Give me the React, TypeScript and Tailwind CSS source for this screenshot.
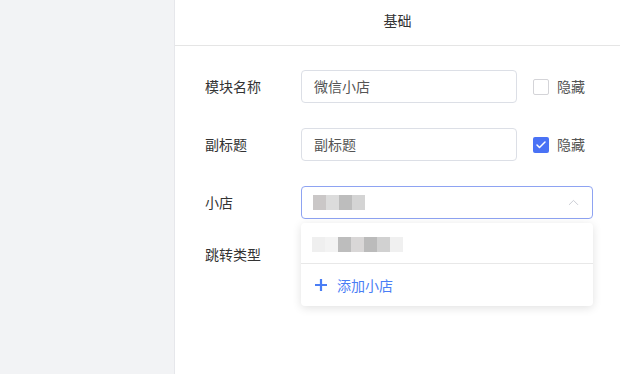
import { Check, ChevronUp } from 'lucide-react'

const font = { fontFamily: '"Noto Sans CJK SC", "Noto Sans", sans-serif' }

const Blur = ({ colors }: { colors: string[] }) => (
  <div className="flex h-[15px] blur-[0.6px]">
    {colors.map((c, i) => (
      <div key={i} className="h-full w-[13px]" style={{ backgroundColor: c }} />
    ))}
  </div>
)

const HideCheck = ({ checked }: { checked: boolean }) => (
  <label className="ml-4 flex items-center gap-2 text-[14px] text-[#555]">
    {checked ? (
      <span className="flex h-4 w-4 items-center justify-center rounded-[2px] bg-[#4a72f5]">
        <Check size={12} strokeWidth={3} className="text-white" />
      </span>
    ) : (
      <span className="h-4 w-4 rounded-[2px] border border-[#d4d4d8] bg-white" />
    )}
    隐藏
  </label>
)

export default function App() {
  return (
    <div className="flex h-[374px] w-[620px] bg-white" style={font}>
      <aside className="w-[175px] shrink-0 border-r border-[#e6e7eb] bg-[#f2f3f5]" />
      <main className="flex flex-1 flex-col">
        <header className="flex h-[46px] items-center justify-center border-b border-[#e5e5e5] pb-[5px] text-[14px] text-[#333]">
          基础
        </header>
        <div className="flex flex-col pl-[30px] pr-[27px] pt-[24px] text-[14px] text-[#333]">
          <div className="flex items-center">
            <span className="w-[96px]">模块名称</span>
            <div className="flex h-[33px] w-[216px] items-center rounded-[4px] border border-[#dcdfe6] px-3 text-[#555]">
              微信小店
            </div>
            <HideCheck checked={false} />
          </div>
          <div className="mt-[25px] flex items-center">
            <span className="w-[96px]">副标题</span>
            <div className="flex h-[33px] w-[216px] items-center rounded-[4px] border border-[#dcdfe6] px-3 text-[#555]">
              副标题
            </div>
            <HideCheck checked={true} />
          </div>
          <div className="mt-[25px] flex items-center">
            <span className="w-[96px]">小店</span>
            <div className="relative flex-1">
              <div className="flex h-[33px] items-center justify-between rounded-[4px] border border-[#8ea3f2] pl-[11px] pr-[10px]">
                <Blur colors={['#cac7c7', '#dcdcdc', '#bdbdbd', '#d4d4d4']} />
                <ChevronUp size={17} strokeWidth={1.2} className="text-[#c0c4cc]" />
              </div>
              <div className="absolute left-0 right-0 top-[37px] z-10 rounded-[4px] bg-white shadow-[0_2px_10px_rgba(0,0,0,0.12)]">
                <div className="flex h-[40px] items-center px-[11px] pt-[2px]">
                  <Blur colors={['#efefef', '#f3f3f3', '#bdbdbd', '#d9d7d7', '#bbbbbb', '#d1d1d1', '#f0f0f0']} />
                </div>
                <div className="flex h-[43px] items-center gap-[10px] border-t border-[#e8e8e8] px-[14px] text-[#4a7ef5]">
                  <svg width="12" height="12" viewBox="0 0 12 12" fill="none" stroke="currentColor" strokeWidth="2.2">
                    <path d="M6 0v12M0 6h12" />
                  </svg>
                  添加小店
                </div>
              </div>
            </div>
          </div>
          <div className="mt-[19px] flex h-[33px] items-center">
            <span className="w-[96px]">跳转类型</span>
          </div>
        </div>
      </main>
    </div>
  )
}
